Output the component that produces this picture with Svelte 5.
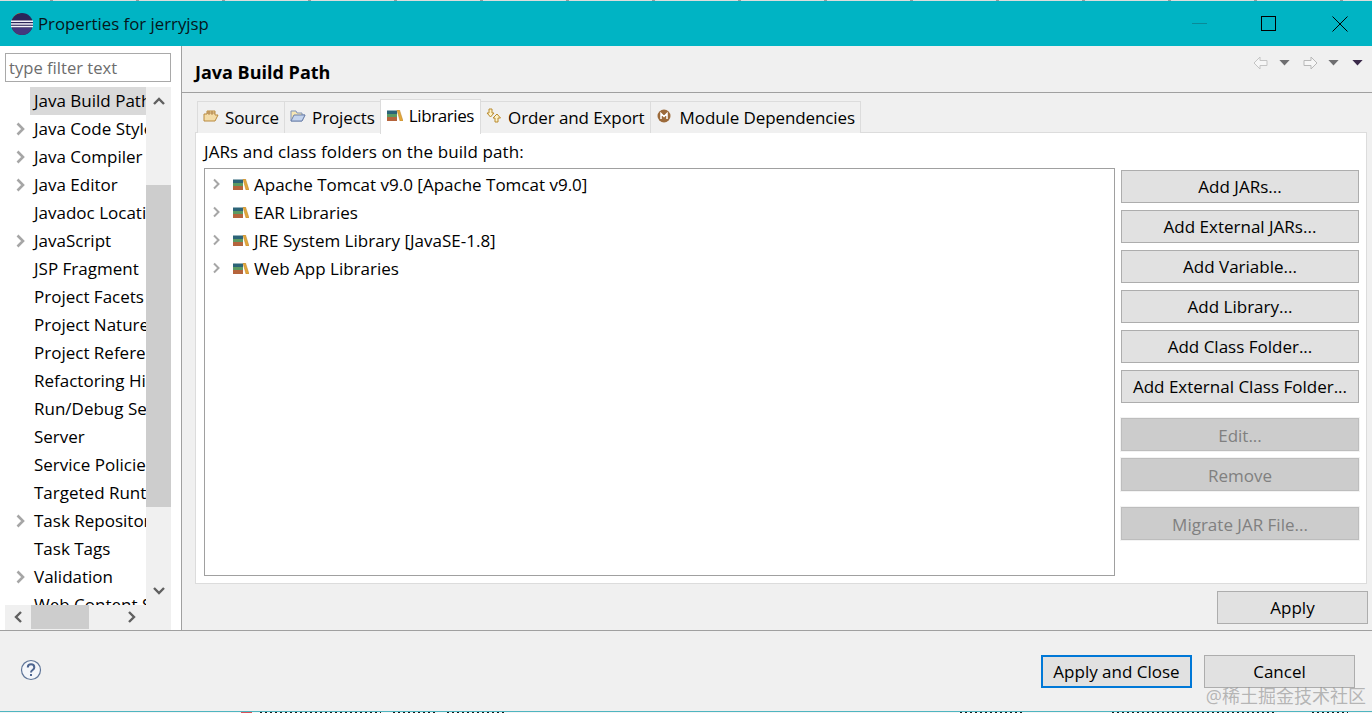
<script>
  const pages = [
    { name: "Java Build Path", selected: true },
    { name: "Java Code Style", arrow: true },
    { name: "Java Compiler", arrow: true },
    { name: "Java Editor", arrow: true },
    { name: "Javadoc Location" },
    { name: "JavaScript", arrow: true },
    { name: "JSP Fragment" },
    { name: "Project Facets" },
    { name: "Project Natures" },
    { name: "Project References" },
    { name: "Refactoring History" },
    { name: "Run/Debug Settings" },
    { name: "Server" },
    { name: "Service Policies" },
    { name: "Targeted Runtimes" },
    { name: "Task Repository", arrow: true },
    { name: "Task Tags" },
    { name: "Validation", arrow: true },
    { name: "Web Content Settings" }
  ];

  const libs = [
    "Apache Tomcat v9.0 [Apache Tomcat v9.0]",
    "EAR Libraries",
    "JRE System Library [JavaSE-1.8]",
    "Web App Libraries"
  ];

  const mainButtons = ["Add JARs...", "Add External JARs...", "Add Variable...", "Add Library...", "Add Class Folder...", "Add External Class Folder..."];

  // bits of the window behind the dialog, showing under its bottom edge
  const behind = [[260, 121], [393, 45], [447, 60], [960, 63], [1112, 165], [1312, 36]];
</script>

{#snippet books()}
  <svg class="books" viewBox="0 0 16 11" aria-hidden="true">
    <rect x="0" y="0.500" width="10" height="3.500" fill="#2c6478" />
    <rect x="0" y="4" width="10" height="3" fill="#5c9a62" />
    <rect x="0" y="7" width="10" height="4" fill="#b5643c" />
    <path d="M10 0h2.500L16 11h-3z" fill="#e3a83a" stroke="#b97f28" stroke-width=".5" />
  </svg>
{/snippet}

<div class="window">
  <div class="topline"></div>
  <header class="titlebar">
    <svg class="logo" viewBox="0 0 24 22" aria-hidden="true">
      <path d="M11 .4A11 11 0 0 0 11 21.600" fill="none" stroke="#e8992c" stroke-width="1.500" />
      <circle cx="13" cy="11" r="11" fill="#2b2559" />
      <path d="M13 22a11 11 0 0 0 10-7H3a11 11 0 0 0 10 7z" fill="#43387f" />
      <rect x="2" y="7.500" width="22" height="1.500" fill="#f4f2fa" />
      <rect x="2" y="10.200" width="22" height="1.500" fill="#f4f2fa" />
      <rect x="2" y="12.800" width="22" height="1.500" fill="#f4f2fa" />
    </svg>
    <span class="title">Properties for jerryjsp</span>
    <div class="winbtns">
      <svg class="min" viewBox="0 0 16 16" aria-hidden="true"><path d="M0 7.500h15" stroke="#0a8a98" stroke-width="1" /></svg>
      <svg viewBox="0 0 16 16" aria-hidden="true"><rect x=".5" y=".5" width="14" height="14" fill="none" stroke="#000" /></svg>
      <svg viewBox="0 0 16 16" aria-hidden="true"><path d="M.5.500l15 15M15.500.500l-15 15" stroke="#000" /></svg>
    </div>
  </header>

  <div class="main">
    <aside class="side">
      <div class="filter">type filter text</div>
      <div class="tree">
        <div class="rows">
          {#each pages as p}
            <div class="row">
              <span class="twist">
                {#if p.arrow}
                  <svg class="chevron" viewBox="0 0 10 14" aria-hidden="true"><path d="M1.500 1.500L7 7l-5.500 5.500" fill="none" stroke="#a6a6a6" stroke-width="2.600" /></svg>
                {/if}
              </span>
              <span class="label" class:selected={p.selected}>{p.name}</span>
            </div>
          {/each}
        </div>
        <div class="vbar">
          <span class="end"><svg viewBox="0 0 14 10" aria-hidden="true"><path d="M2 8l5-5 5 5" fill="none" stroke="#606060" stroke-width="2.400" /></svg></span>
          <div class="vtrack"><div class="vthumb"></div></div>
          <span class="end"><svg viewBox="0 0 14 10" aria-hidden="true"><path d="M2 2l5 5 5-5" fill="none" stroke="#606060" stroke-width="2.400" /></svg></span>
        </div>
        <div class="hbar">
          <span class="hend"><svg viewBox="0 0 10 14" aria-hidden="true"><path d="M8 2L3 7l5 5" fill="none" stroke="#606060" stroke-width="2.400" /></svg></span>
          <div class="hthumb"></div>
          <span class="hend right"><svg viewBox="0 0 10 14" aria-hidden="true"><path d="M2 2l5 5-5 5" fill="none" stroke="#606060" stroke-width="2.400" /></svg></span>
        </div>
      </div>
    </aside>

    <section class="content">
      <div class="heading">
        <h1>Java Build Path</h1>
        <div class="navs">
          <svg class="arrow" viewBox="0 0 16 14" aria-hidden="true"><path d="M1 7l6-6v3.500h7v5H7V13z" fill="#f6f6f6" stroke="#c4c4c4" /></svg>
          <svg class="tri" viewBox="0 0 12 7" aria-hidden="true"><path d="M0 0h12L6 6.500z" fill="#6e6e70" /></svg>
          <svg class="arrow gap" viewBox="0 0 16 14" aria-hidden="true"><path d="M15 7L9 1v3.500H2v5h7V13z" fill="#f6f6f6" stroke="#b8b8b8" /></svg>
          <svg class="tri" viewBox="0 0 12 7" aria-hidden="true"><path d="M0 0h12L6 6.500z" fill="#6e6e70" /></svg>
          <svg class="tri last" viewBox="0 0 12 7" aria-hidden="true"><path d="M0 0h12L6 6.500z" fill="#3a2a4a" /></svg>
        </div>
      </div>

      <div class="tabs">
        <div class="tab">
          <svg class="tabicon" viewBox="0 0 16 14" aria-hidden="true">
            <path d="M1 12V5h3V2h8v4h3l-3 6z" fill="#f3dca8" stroke="#b98a3e" />
            <path d="M6 2v4M9 2v4M4 4h8" stroke="#a5743a" stroke-width=".8" />
          </svg>Source
        </div>
        <div class="tab">
          <svg class="tabicon" viewBox="0 0 16 14" aria-hidden="true">
            <path d="M1 12V2h5l1 2h5v2h3l-3 6z" fill="#f6e6b4" stroke="#7f93b8" />
            <path d="M1 12l3-6h11l-3 6z" fill="#c4d4ee" stroke="#6c80aa" />
          </svg>Projects
        </div>
        <div class="tab active">{@render books()}Libraries</div>
        <div class="tab">
          <svg class="tabicon" viewBox="0 0 16 16" aria-hidden="true">
            <path d="M3 1h3v4h2L4.500 9 1 5h2z" fill="#fdf2c8" stroke="#b98a2e" />
            <path d="M11 6l3.500 4H12v4H9v-4H7z" fill="#fdf2c8" stroke="#b98a2e" />
          </svg>Order and Export
        </div>
        <div class="tab">
          <svg class="tabicon module" viewBox="0 0 16 16" aria-hidden="true">
            <circle cx="8" cy="8" r="6.500" fill="#9c6a3a" />
            <path d="M5 11V5.500L8 8.500l3-3V11" fill="none" stroke="#fff" stroke-width="1.500" />
          </svg>Module Dependencies
        </div>
      </div>

      <div class="panel">
        <div class="caption">JARs and class folders on the build path:</div>
        <div class="panelbody">
          <div class="libs">
            {#each libs as lib}
              <div class="lib">
                <span class="libtwist">
                  <svg class="chevron" viewBox="0 0 10 14" aria-hidden="true"><path d="M2 2.500L6.500 7 2 11.500" fill="none" stroke="#a6a6a6" stroke-width="2" /></svg>
                </span>
                {@render books()}
                <span>{lib}</span>
              </div>
            {/each}
          </div>
          <div class="actions">
            {#each mainButtons as b}
              <button type="button">{b}</button>
            {/each}
            <button type="button" class="sep" disabled>Edit...</button>
            <button type="button" disabled>Remove</button>
            <button type="button" class="sep last" disabled>Migrate JAR File...</button>
          </div>
        </div>
      </div>

      <div class="applyrow"><button type="button" class="wide">Apply</button></div>
    </section>
  </div>

  <footer class="footer">
    <svg class="help" viewBox="0 0 22 22" aria-hidden="true">
      <circle cx="11" cy="11" r="9.500" fill="#f4f6fa" stroke="#5f7598" stroke-width="1.200" />
      <path d="M7.800 8.500c0-4.200 6.500-4.200 6.500 0 0 2.600-3.300 2.400-3.300 5" fill="none" stroke="#4d6590" stroke-width="2" />
      <rect x="10" y="15" width="2" height="2" fill="#4d6590" />
    </svg>
    <div class="footbtns">
      <button type="button" class="wide primary">Apply and Close</button>
      <button type="button" class="wide">Cancel</button>
    </div>
    <span class="mark">@稀土掘金技术社区</span>
  </footer>
  <div class="bottomline">
    <i class="red"></i>
    {#each behind as [x, w]}
      <i style="left: {x}px; width: {w}px"></i>
    {/each}
  </div>
</div>

<style>
  :global(body) {
    margin: 0;
  }

  .window {
    width: 1372px;
    height: 713px;
    display: flex;
    flex-direction: column;
    overflow: hidden;
    background: #f0f0f0;
    color: #000;
    font-family: "Open Sans", "Noto Sans CJK SC", sans-serif;
    font-size: 17px;
  }

  .topline {
    height: 1px;
    background: repeating-linear-gradient(90deg, #dcdcdc 0 50px, #9a9a9a 50px 53px, #dcdcdc 53px 86px);
  }

  .titlebar {
    height: 45px;
    flex: none;
    display: flex;
    align-items: center;
    padding-left: 9px;
    background: #00b4c4;
  }

  .logo {
    width: 24px;
    height: 22px;
    margin-right: 5px;
  }

  .title {
    font-size: 16.800px;
    color: #06161a;
  }

  .winbtns {
    margin-left: auto;
    display: flex;
    align-items: center;
    gap: 55px;
    padding-right: 24px;
  }

  .winbtns svg {
    width: 16px;
    height: 16px;
    display: block;
  }

  .winbtns .min {
    margin-right: -2px;
  }

  .main {
    height: 584px;
    flex: none;
    display: flex;
  }

  .side {
    width: 182px;
    flex: none;
    box-sizing: border-box;
    background: #fff;
    border-right: 1px solid #a0a0a0;
    padding: 7px 10px 0 5px;
  }

  .filter {
    box-sizing: border-box;
    height: 29px;
    line-height: 27px;
    padding-left: 3px;
    background: #fff;
    border: 1px solid #a9a9a9;
    color: #6d6d6d;
    font-size: 16.600px;
  }

  .tree {
    margin-top: 5px;
    height: 543px;
    display: grid;
    grid-template-columns: 141px 25px;
    grid-template-rows: 518px 25px;
    background: #fff;
  }

  .rows {
    overflow: hidden;
  }

  .row {
    height: 28px;
    display: flex;
    align-items: center;
    white-space: nowrap;
  }

  .twist {
    width: 25px;
    flex: none;
    padding-left: 11px;
    box-sizing: border-box;
    display: flex;
  }

  .chevron {
    width: 10px;
    height: 14px;
    display: block;
  }

  .label {
    flex: 1;
    height: 28px;
    line-height: 28px;
    padding-left: 4px;
    overflow: hidden;
  }

  .label.selected {
    background: #d9d9d9;
  }

  .vbar {
    grid-row: 1 / span 2;
    grid-column: 2;
    display: flex;
    flex-direction: column;
    padding-bottom: 25px;
    background: #f0f0f0;
  }

  .end {
    height: 28px;
    flex: none;
    display: flex;
    align-items: center;
    justify-content: center;
  }

  .end svg {
    width: 14px;
    height: 10px;
  }

  .vtrack {
    flex: 1;
    padding-top: 70px;
  }

  .vthumb {
    height: 322px;
    background: #cdcdcd;
  }

  .hbar {
    grid-row: 2;
    grid-column: 1;
    background: #f0f0f0;
    display: flex;
    align-items: flex-start;
  }

  .hend {
    width: 26px;
    height: 24px;
    display: flex;
    align-items: center;
    justify-content: center;
  }

  .hend svg {
    width: 10px;
    height: 14px;
  }

  .hend.right {
    margin-left: auto;
    width: 29px;
  }

  .hthumb {
    width: 58px;
    height: 24px;
    background: #cdcdcd;
  }

  .content {
    flex: 1;
    min-width: 0;
    display: flex;
    flex-direction: column;
    padding: 0 5px 0 13px;
  }

  .heading {
    height: 47px;
    flex: none;
    margin: 0 -5px 0 -13px;
    padding: 0 5px 0 13px;
    border-bottom: 1px solid #a0a0a0;
    box-sizing: border-box;
    display: flex;
    align-items: center;
    justify-content: space-between;
  }

  h1 {
    margin: 0;
    font-size: 18px;
    font-weight: 700;
    padding-top: 5px;
  }

  .navs {
    display: flex;
    align-items: center;
    margin-bottom: 12px;
  }

  .arrow {
    width: 16px;
    height: 14px;
  }

  .tri {
    width: 11px;
    height: 6px;
    margin-left: 10px;
  }

  .arrow.gap {
    margin-left: 12px;
  }

  .tri.last {
    margin-left: 13px;
    margin-right: 4px;
  }

  .tabs {
    height: 39px;
    flex: none;
    display: flex;
    align-items: flex-end;
    margin-left: 2px;
    position: relative;
    top: 1px;
    letter-spacing: -0.1px;
  }

  .tab {
    box-sizing: border-box;
    height: 32px;
    display: flex;
    align-items: center;
    padding: 0 5px;
    border: 1px solid #dcdcdc;
    border-bottom: 0;
    background: #f0f0f0;
  }

  .tab + .tab {
    margin-left: -1px;
  }

  .tab.active {
    position: relative;
    height: 35px;
    padding: 0 6px 3px 6px;
    background: #fff;
    margin-bottom: -1px;
    letter-spacing: -0.4px;
  }

  .tab.active .books {
    margin-right: 6px;
  }

  .tabicon {
    width: 16px;
    height: 16px;
    margin-right: 6px;
    margin-top: -3px;
  }

  .tabicon.module {
    margin-right: 8px;
  }

  .books {
    width: 16px;
    height: 11px;
    margin-right: 5px;
    flex: none;
  }

  .panel {
    height: 452px;
    flex: none;
    box-sizing: border-box;
    background: #fff;
    border: 1px solid #dcdcdc;
    padding: 7px 7px 7px 8px;
  }

  .caption {
    height: 28px;
    line-height: 24px;
    letter-spacing: 0.1px;
  }

  .panelbody {
    display: flex;
    gap: 6px;
  }

  .libs {
    box-sizing: border-box;
    width: 911px;
    height: 408px;
    flex: none;
    border: 1px solid #a0a0a0;
    background: #fff;
    padding-top: 1px;
  }

  .lib {
    height: 28px;
    display: flex;
    align-items: center;
    white-space: nowrap;
  }

  .libtwist {
    width: 28px;
    padding-left: 7px;
    box-sizing: border-box;
    flex: none;
  }

  .actions {
    width: 238px;
    flex: none;
    padding-top: 2px;
    display: flex;
    flex-direction: column;
    gap: 7px;
  }

  button {
    box-sizing: border-box;
    height: 33px;
    padding: 0;
    border: 1px solid #adadad;
    background: #e1e1e1;
    color: #000;
    font: inherit;
  }

  button:disabled {
    padding-top: 2px;
    background: #cccccc;
    border-color: #bdbdbd;
    box-shadow: 0 0 0 1px #f3f3f3;
    color: #808080;
  }

  button.sep {
    margin-top: 8px;
  }

  button.sep.last {
    margin-top: 9px;
  }

  .applyrow {
    padding-top: 7px;
    margin-right: -1px;
    display: flex;
    justify-content: flex-end;
  }

  .wide {
    width: 151px;
  }

  .footer {
    height: 81px;
    flex: none;
    box-sizing: border-box;
    border-top: 1px solid #a0a0a0;
    position: relative;
    display: flex;
    align-items: flex-start;
    justify-content: space-between;
    padding: 24px 17px 0 20px;
  }

  .help {
    width: 22px;
    height: 22px;
    margin-top: 4px;
  }

  .footbtns {
    display: flex;
    gap: 12px;
  }

  .primary {
    border: 2px solid #0078d7;
  }

  .mark {
    position: absolute;
    right: 6px;
    bottom: 3px;
    font-size: 18px;
    color: rgba(130, 130, 130, 0.55);
  }

  .bottomline {
    height: 2px;
    flex: none;
    box-sizing: border-box;
    position: relative;
    border-top: 1px solid #4fb5c0;
    background: #f4f4f4;
  }

  .bottomline i {
    position: absolute;
    top: 0;
    height: 1px;
    background: repeating-linear-gradient(90deg, #1a1a1a 0 2px, #f4f4f4 2px 5px);
  }

  .bottomline .red {
    left: 241px;
    width: 11px;
    background: #d8535a;
  }
</style>
